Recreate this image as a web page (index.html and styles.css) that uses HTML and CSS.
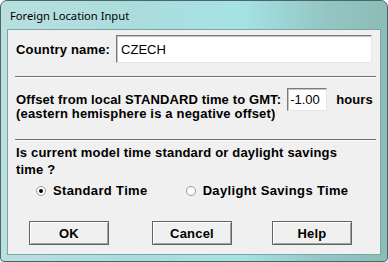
FILE: index.html
```html
<!DOCTYPE html>
<html lang="en">
<head>
    <meta charset="UTF-8">
    <title>Foreign Location Input</title>
    <link rel="stylesheet" href="styles.css">
</head>
<body>

<div class="window">
    <div class="titlebar">
        <span class="title">Foreign Location Input</span>
    </div>

    <div class="client">
        <div class="country-row">
            <span class="label">Country name:</span>
            <div class="field country-field">CZECH</div>
        </div>

        <div class="separator"></div>

        <div class="offset-row">
            <span class="label">Offset from local STANDARD time to GMT:</span>
            <div class="field offset-field">-1.00</div>
            <span class="label hours">hours</span>
        </div>
        <div class="note">(eastern hemisphere is a negative offset)</div>

        <div class="separator second"></div>

        <div class="question">Is current model time standard or daylight savings<br>time ?</div>

        <div class="radios">
            <div class="radio-item">
                <span class="radio checked"></span>
                <span>Standard Time</span>
            </div>
            <div class="radio-item daylight">
                <span class="radio"></span>
                <span>Daylight Savings Time</span>
            </div>
        </div>

        <div class="buttons">
            <button class="btn ok">OK</button>
            <button class="btn cancel">Cancel</button>
            <button class="btn help">Help</button>
        </div>
    </div>
</div>

</body>
</html>
```

FILE: styles.css
```css
body {
    margin: 0;
    background: #ffffff;
    font-family: "Liberation Sans", Arial, sans-serif;
}

.window {
    width: 388px;
    height: 262px;
    box-sizing: border-box;
    border: 1px solid #4a6767;
    border-radius: 7px 7px 4px 4px;
    background: linear-gradient(to right, #b9dfdf 0%, #abdcdd 35%, #a6e2e4 62%, #93c6c3 84%, #8cbcb8 100%);
    display: flex;
    flex-direction: column;
}

.titlebar {
    height: 28px;
    padding-left: 9px;
    display: flex;
    align-items: center;
}

.title {
    font-family: "Noto Sans", sans-serif;
    font-size: 11.2px;
    color: #000;
    margin-top: 1px;
}

.client {
    flex: 1;
    margin: 0 6px 6px 6px;
    border: 1px solid #79a7a5;
    background: #f0f0f0;
    padding: 5px 8px 0 8px;
    font-size: 13px;
    font-weight: bold;
    letter-spacing: 0.18px;
    color: #000;
    white-space: nowrap;
}

.country-row {
    display: flex;
    align-items: center;
    height: 28px;
}

.field {
    box-sizing: border-box;
    background: #fff;
    border-top: 1px solid #7b7b7b;
    border-left: 1px solid #7b7b7b;
    border-right: 1px solid #e6e6e6;
    border-bottom: 1px solid #e6e6e6;
    box-shadow: inset 1px 1px 0 #c4c4c4;
    font-weight: normal;
    letter-spacing: 0;
    display: flex;
    align-items: center;
}

.country-field {
    flex: 1;
    height: 28px;
    margin-left: 6px;
    padding-left: 4px;
}

.separator {
    margin: 13px -4px 0 -1px;
    border-top: 1px solid #6e6e6e;
    border-bottom: 1px solid #ffffff;
}

.separator.second {
    margin-top: 18px;
}

.offset-row {
    display: flex;
    align-items: center;
    height: 23px;
    margin-top: 10px;
    letter-spacing: 0.12px;
}

.offset-row > * {
    flex-shrink: 0;
}

.offset-field {
    width: 40px;
    height: 23px;
    margin-left: 6px;
    padding-left: 2px;
}

.hours {
    margin-left: 9px;
}

.note {
    margin-top: -5px;
    line-height: 15px;
}

.question {
    margin-top: 3px;
    line-height: 17px;
}

.radios {
    display: flex;
    align-items: center;
    height: 17px;
    margin-top: 4px;
    padding-left: 20px;
    letter-spacing: 0.35px;
}

.radio-item {
    display: flex;
    align-items: center;
    gap: 7px;
}

.radio-item.daylight {
    margin-left: 38px;
}

.radio {
    width: 10px;
    height: 10px;
    box-sizing: border-box;
    border-radius: 50%;
    border: 1px solid #9a9a9a;
    background: #fff;
    display: flex;
    align-items: center;
    justify-content: center;
}

.radio.checked::after {
    content: "";
    width: 4px;
    height: 4px;
    border-radius: 50%;
    background: #000;
}

.buttons {
    display: flex;
    margin-top: 22px;
    padding-left: 13px;
}

.btn {
    width: 80px;
    height: 24px;
    box-sizing: border-box;
    background: #f0f0f0;
    border: 1px solid #646464;
    box-shadow: inset 1px 1px 0 #ffffff, inset -1px -1px 0 #a0a0a0;
    font-family: "Liberation Sans", Arial, sans-serif;
    font-size: 13px;
    font-weight: bold;
    letter-spacing: 0.2px;
    color: #000;
    padding: 0;
}

.btn.cancel {
    margin-left: 43px;
}

.btn.help {
    margin-left: 40px;
}
```
